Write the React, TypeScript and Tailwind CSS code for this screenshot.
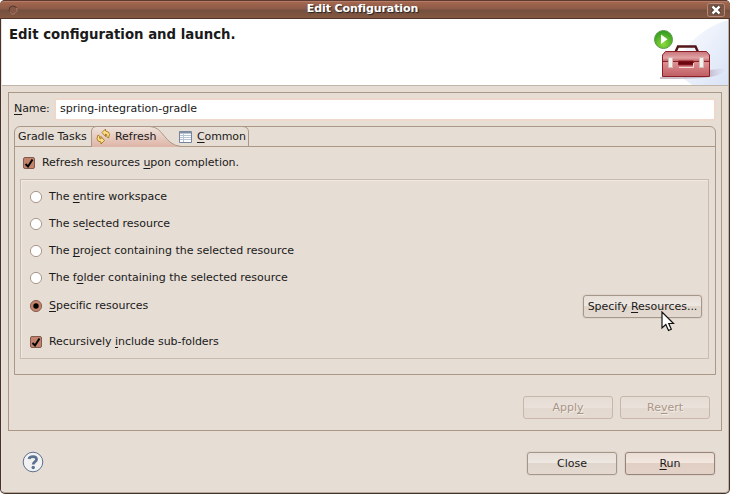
import type { ReactNode } from "react";

const K = ({ children }: { children: ReactNode }) => (
  <span className="underline decoration-1 underline-offset-2 [text-decoration-skip-ink:none]">{children}</span>
);

const Check = () => (
  <svg width="14" height="14" viewBox="0 0 14 14" className="shrink-0">
    <rect x="1.5" y="1.500" width="11" height="11" rx="1.500" fill="#c2836a" stroke="#805c50" />
    <path d="M3.500 8 6 10.500 10.500 3.500" fill="none" stroke="#000" strokeWidth="2" />
  </svg>
);

const Radio = ({ on }: { on?: boolean }) => (
  <svg width="14" height="14" viewBox="0 0 14 14" className="shrink-0">
    <circle cx="7" cy="7" r="5.6" fill={on ? "#c2836a" : "#fff"} stroke={on ? "#8a6254" : "#ab978b"} />
    {on && <circle cx="7" cy="7" r="2.7" fill="#000" />}
  </svg>
);

const Row = ({ on, className, children }: { on?: boolean; className: string; children: ReactNode }) => (
  <div className={"flex h-[14px] items-center " + className}>
    <Radio on={on} />
    <span className="ml-[6px] leading-[14px]">{children}</span>
  </div>
);

const base = "flex h-[23px] items-center justify-center rounded-[3px] border leading-none";
const plain = "border-[#a6978b] bg-[linear-gradient(#e7dfd7,#eee8e3_50%,#e1d6cc_50%,#e3d9d0)] shadow-[0_0_0_1px_#ded3c9]";
const primary = "border-[#978379] bg-[linear-gradient(#eaddd4,#f3e8e1_50%,#e1cfc4_50%,#e3d2c7)] shadow-[0_0_0_1px_#ded3c9]";
const disabled = "border-[#c8b6a9] bg-[linear-gradient(#e6ddd5,#e9e1da_50%,#e3d9cf_50%,#e4dad1)] text-[#a99687] [text-shadow:1px_1px_0_#f4eee9]";

const Toolbox = () => (
  <svg width="90" height="66" viewBox="638 19 90 66" className="block">
    <defs>
      <linearGradient id="sky" x1="0" y1="0" x2="1" y2="1">
        <stop offset="0" stopColor="#fcfdff" />
        <stop offset="1" stopColor="#d9e3f6" />
      </linearGradient>
      <linearGradient id="box" x1="0" y1="0" x2="0" y2="1">
        <stop offset="0" stopColor="#c9757a" />
        <stop offset=".25" stopColor="#e0a3a4" />
        <stop offset=".38" stopColor="#c4686d" />
        <stop offset=".42" stopColor="#dd9093" />
        <stop offset="1" stopColor="#bf5d63" />
      </linearGradient>
      <radialGradient id="go" cx=".5" cy=".75" r=".7">
        <stop offset="0" stopColor="#8edb3a" />
        <stop offset="1" stopColor="#349c20" />
      </radialGradient>
      <linearGradient id="shade" x1="0" y1="0" x2="1" y2="0">
        <stop offset=".7" stopColor="#a88fa0" stopOpacity=".6" />
        <stop offset="1" stopColor="#c0bfdc" stopOpacity="0" />
      </linearGradient>
    </defs>
    <path d="M728 20C704 27 688 42 680 58V76L692 85H728Z" fill="url(#sky)" />
    <path d="M660 77H708L710 70 727 68C722 77 710 79 660 79Z" fill="url(#shade)" />
    <path d="M675.500 52 678 46.500H695.500L698 52" fill="none" stroke="#54151b" strokeWidth="2.400" />
    <path d="M662.500 55 665.500 51.500H706.500L709.500 55V76.500H662.500Z" fill="url(#box)" stroke="#8c2028" />
    <path d="M663 61.500H709" stroke="#8c2028" />
    <path d="M678.500 61H693.500V65H678.500Z" fill="#6c0710" stroke="#8c2028" />
    <path d="M679 67.500H693.500V63" fill="none" stroke="#f4d9da" />
    <rect x="668.500" y="57.500" width="4" height="10" fill="#f2f2ef" stroke="#d6bab7" />
    <rect x="699.500" y="57.500" width="4" height="10" fill="#f2f2ef" stroke="#d6bab7" />
    <circle cx="663.500" cy="39.500" r="9" fill="url(#go)" stroke="#5a9b49" />
    <path d="M661 34.500V44L667.500 39.300Z" fill="#fff" />
  </svg>
);

export default function App() {
  return (
    <div className="flex h-[494px] w-[730px] flex-col overflow-hidden rounded-[5px] bg-[#403431] [font-family:'DejaVu_Sans',sans-serif] text-[11px] tracking-[-0.025px] text-[#1a1a1a]">
      <header className="flex h-[19px] shrink-0 items-center rounded-t-[4px] border-t border-b border-t-[#5c3a30] border-b-[#4f352c] bg-[linear-gradient(#c78f7c_0,#a3674f_1px,#8c5a47_8px,#74503f_9px,#85573f_100%)] px-2">
        <svg width="10" height="10" viewBox="0 0 10 10" className="shrink-0">
          <circle cx="5" cy="5" r="4" fill="#855745" stroke="#553a30" />
          <path d="M1.500 7A4 4 0 1 0 8.500 3" fill="none" stroke="#b88c7b" strokeWidth=".9" />
        </svg>
        <span className="flex-1 text-center text-[11px] font-bold leading-none tracking-[-0.1px] text-white [text-shadow:1px_1px_1px_#222]"><span className="relative -top-px">Edit Configuration</span></span>
        <svg width="18" height="14" viewBox="0 0 18 14" className="-mr-[3px] shrink-0">
          <rect x=".5" y=".5" width="17" height="13" rx="2" fill="#7c5545" stroke="#b68b7b" />
          <path d="m5.500 3.500 7 7m0-7-7 7" stroke="#33231e" strokeWidth="4" />
          <path d="m5.500 3.500 7 7m0-7-7 7" stroke="#fff" strokeWidth="2.500" />
        </svg>
      </header>
      <main className="mb-px ml-px mr-px flex min-h-0 flex-1 flex-col rounded-b-[4px] border-b border-l border-r border-b-[#b9a692] border-l-[#f3dfd6] border-r-[#c0ae9f] bg-[#e6ddd4]">
        <section className="flex h-[67px] shrink-0 justify-between overflow-hidden border-b border-[#c0b5a8] bg-white">
          <h1 className="pl-[7px] pt-[7px] text-[13.300px] font-bold leading-[17px] tracking-normal">Edit configuration and launch.</h1>
          <Toolbox />
        </section>
        <section className="mx-[6px] mt-[6px] flex h-[339px] shrink-0 flex-col border border-[#ab9786] px-[5px] pt-[5px]">
          <div className="flex h-[22px] items-center">
            <span className="w-[40px] pt-px tracking-[-0.1px]"><K>N</K>ame:</span>
            <div className="flex h-[23px] flex-1 items-center rounded-[3px] border-2 border-[#eed8cc] bg-white pl-[4px] pt-px">spring-integration-gradle</div>
          </div>
          <div className="mt-[6px] flex h-[249px] flex-col rounded-t-[6px] border border-[#ab9786]">
            <div className="relative flex h-[20px] border-b border-[#ab9786]">
              <svg width="236" height="21" viewBox="14 126 236 21" className="absolute -left-px -top-px">
                <defs>
                  <linearGradient id="tab" x1="0" y1="0" x2="0" y2="1"><stop stopColor="#eee3dc" /><stop offset="1" stopColor="#deb4a6" /></linearGradient>
                </defs>
                <path d="M91.500 147V131Q92 126.500 97 126.500H150C164 127 164 145 181 146.500V147Z" fill="url(#tab)" />
                <path d="M91.500 147V131Q92 126.500 97 126.500H150C164 127 164 145 181 146.500M243 126.500Q248.500 127 248.500 132V146" fill="none" stroke="#ab9786" />
                <g fill="#fbe08a" stroke="#a87618" strokeWidth=".9" strokeLinejoin="round">
                  <path d="M102 132.500 105.500 129V131Q109.500 131.500 109.500 134.500L108.500 138 106.800 136.800Q107.500 134 105.500 134V136.500Z" />
                  <path d="M104.500 140.500 101 144V142Q97 141.500 97 138.500L98 135 99.700 136.200Q99 139 101 139V136.500Z" />
                </g>
                <path d="M179.500 131.500H191.500V142.500H179.500Z" fill="#fff" stroke="#73849c" />
                <path d="M180 132.500H191" stroke="#8090a6" strokeWidth="2" />
                <path d="M180 135.500H191M180 137.500H191M180 139.500H191M183.500 134V142" stroke="#b5c3d5" />
              </svg>
              <span className="relative ml-[3px] w-[97px] leading-[20px] tracking-[-0.08px]">Gradle Tasks</span>
              <span className="relative w-[82px] leading-[20px]">Refresh</span>
              <span className="relative leading-[20px] tracking-[-0.12px]"><K>C</K>ommon</span>
            </div>
            <div className="ml-[7px] mt-[9px] flex h-[14px] items-center gap-[6px]"><Check /><span>Refresh resources <K>u</K>pon completion.</span></div>
            <div className="ml-[5px] mt-[9px] flex h-[180px] w-[689px] flex-col border border-[#c9bbad] pl-[8px] shadow-[inset_1px_1px_0_#f0e9e3]">
              <Row className="mt-[10px]">The <K>e</K>ntire workspace</Row>
              <Row className="mt-[13px]">The se<K>l</K>ected resource</Row>
              <Row className="mt-[13px]">The <K>p</K>roject containing the selected resource</Row>
              <Row className="mt-[13px]">The f<K>o</K>lder containing the selected resource</Row>
              <div className="relative mt-[9px] flex h-[24px] items-center justify-between pr-[6px]">
                <Row on className=""><K>S</K>pecific resources</Row>
                <button className={base + " mt-px w-[119px] " + plain}><span>Specify <K>R</K>esources...</span></button>
                <svg width="14" height="21" viewBox="0 0 14 21" className="absolute right-[33px] top-[17px]">
                  <path d="M1 1V17L4.800 13.500 7.500 19.500 10.300 18.300 7.700 12.500H12.500Z" fill="#fff" stroke="#111" strokeWidth="1.200" />
                </svg>
              </div>
              <div className="mt-[17px] flex h-[14px] items-center gap-[6px]"><Check /><span className="tracking-[-0.05px]">Recursively <K>i</K>nclude sub-folders</span></div>
            </div>
          </div>
          <div className="mt-[21px] flex justify-end gap-[7px]">
            <button className={base + " w-[90px] " + disabled}><span>Appl<K>y</K></span></button>
            <button className={base + " mr-[6px] w-[90px] " + disabled}><span>Re<K>v</K>ert</span></button>
          </div>
        </section>
        <footer className="flex items-center justify-between pl-[20px] pr-[13px] pt-[21px]">
          <svg width="22" height="22" viewBox="0 0 22 22" className="-mt-[3px]">
            <circle cx="11" cy="11" r="9.800" fill="#f2f2f2" stroke="#5d7191" />
            <path d="M7 8Q7.300 5.700 11 5.700T14.500 8.500C14.500 10.700 11.200 10.500 11.200 13.500" fill="none" stroke="#5d7191" strokeWidth="2.800" />
            <circle cx="11.200" cy="16.500" r="1.700" fill="#5d7191" />
          </svg>
          <div className="flex gap-[8px]">
            <button className={base + " w-[90px] " + plain}>Close</button>
            <button className={base + " w-[90px] " + primary}><span><K>R</K>un</span></button>
          </div>
        </footer>
      </main>
    </div>
  );
}
